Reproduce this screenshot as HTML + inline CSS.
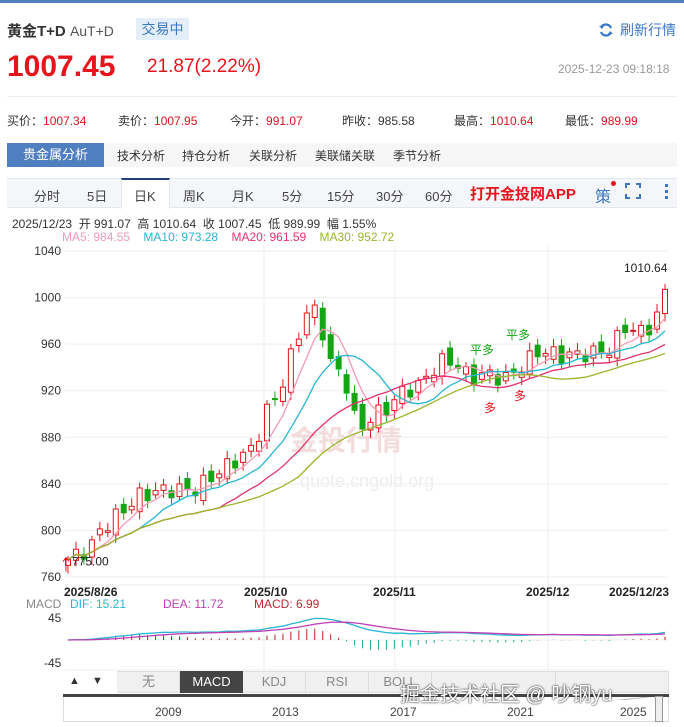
<!DOCTYPE html>
<html><head><meta charset="utf-8">
<style>
*{margin:0;padding:0;box-sizing:border-box}
body{width:684px;height:727px;background:#fff;font-family:"Liberation Sans","Noto Sans CJK SC",sans-serif;position:relative;overflow:hidden;color:#333}
.a{position:absolute;white-space:nowrap}
</style></head><body>
<div class="a" style="left:0;top:0;width:684px;height:3px;background:#4f7fbf"></div>
<div class="a" style="left:7px;top:20px;font-size:15px;color:#333"><b>黄金T+D</b> <span style="font-size:14px;color:#555">AuT+D</span></div>
<div class="a" style="left:136px;top:18px;width:53px;height:22px;background:#e3eef9;color:#3b78c4;font-size:14px;line-height:22px;text-align:center">交易中</div>
<svg class="a" style="left:598px;top:22px" width="16" height="16" viewBox="0 0 16 16"><path d="M13 6A5.5 5.5 0 0 0 3 5.5M3 10a5.5 5.5 0 0 0 10 .5" stroke="#3b78c4" stroke-width="2.2" fill="none"/><path d="M1 4l3 3 2-3zM15 12l-3-3-2 3z" fill="#3b78c4"/></svg>
<div class="a" style="left:620px;top:20px;font-size:14px;color:#3b78c4">刷新行情</div>
<div class="a" style="left:7px;top:50px;font-size:30px;font-weight:bold;color:#e8141b">1007.45</div>
<div class="a" style="left:147px;top:56px;font-size:19px;color:#e8141b">21.87(2.22%)</div>
<div class="a" style="left:558px;top:62px;font-size:12px;color:#999">2025-12-23 09:18:18</div>
<div class="a" style="left:7px;top:96px;width:670px;height:1px;background:#eee"></div>
<div class="a" style="left:7px;top:112px;font-size:12px;color:#333">买价：<span style="color:#d9131e">1007.34</span></div>
<div class="a" style="left:118px;top:112px;font-size:12px">卖价：<span style="color:#d9131e">1007.95</span></div>
<div class="a" style="left:230px;top:112px;font-size:12px">今开：<span style="color:#d9131e">991.07</span></div>
<div class="a" style="left:342px;top:112px;font-size:12px">昨收：985.58</div>
<div class="a" style="left:454px;top:112px;font-size:12px">最高：<span style="color:#d9131e">1010.64</span></div>
<div class="a" style="left:565px;top:112px;font-size:12px">最低：<span style="color:#d9131e">989.99</span></div>
<div class="a" style="left:7px;top:143px;width:670px;height:24px;background:#f6f6f6"></div>
<div class="a" style="left:7px;top:143px;width:97px;height:24px;background:#4f7fbf;color:#fff;font-size:13px;line-height:24px;text-align:center">贵金属分析</div>
<div class="a" style="left:117px;top:147px;font-size:12px;color:#333">技术分析</div>
<div class="a" style="left:182px;top:147px;font-size:12px">持仓分析</div>
<div class="a" style="left:249px;top:147px;font-size:12px">关联分析</div>
<div class="a" style="left:315px;top:147px;font-size:12px">美联储关联</div>
<div class="a" style="left:393px;top:147px;font-size:12px">季节分析</div>
<div class="a" style="left:7px;top:178px;width:670px;height:30px;background:#f4f6f9;border-top:1px solid #e3e8ef;border-bottom:1px solid #e3e8ef"></div>
<div class="a" style="left:121px;top:178px;width:49px;height:31px;background:#fff;border-top:2px solid #1f3f75;border-left:1px solid #e3e8ef;border-right:1px solid #e3e8ef"></div>
<div class="a" style="top:186px;left:34px;font-size:13px;color:#444">分时</div>
<div class="a" style="top:186px;left:87px;font-size:13px;color:#444">5日</div>
<div class="a" style="top:186px;left:134px;font-size:13px;color:#444">日K</div>
<div class="a" style="top:186px;left:183px;font-size:13px;color:#444">周K</div>
<div class="a" style="top:186px;left:232px;font-size:13px;color:#444">月K</div>
<div class="a" style="top:186px;left:282px;font-size:13px;color:#444">5分</div>
<div class="a" style="top:186px;left:327px;font-size:13px;color:#444">15分</div>
<div class="a" style="top:186px;left:376px;font-size:13px;color:#444">30分</div>
<div class="a" style="top:186px;left:425px;font-size:13px;color:#444">60分</div>
<div class="a" style="top:183px;left:470px;font-size:15px;color:#e8141b;font-weight:bold">打开金投网APP</div>
<div class="a" style="top:183px;left:595px;font-size:16px;color:#3b78c4">策</div>
<div class="a" style="top:181px;left:611px;width:5px;height:5px;border-radius:50%;background:#e8141b"></div>
<svg class="a" style="left:625px;top:183px" width="16" height="16"><path d="M1 5V1h4M11 1h4v4M15 11v4h-4M5 15H1v-4" stroke="#3b78c4" stroke-width="2" fill="none"/></svg>
<div class="a" style="left:665px;top:184px;width:3px;height:3px;background:#3b78c4;box-shadow:0 6px #3b78c4,0 12px #3b78c4"></div>
<div class="a" style="left:12px;top:215px;font-size:12px;color:#333">2025/12/23 &nbsp;开 991.07 &nbsp;高 1010.64 &nbsp;收 1007.45 &nbsp;低 989.99 &nbsp;幅 1.55%</div>
<div class="a" style="left:62px;top:230px;font-size:12px"><span style="color:#f49ab5">MA5: 984.55</span> &nbsp;&nbsp;&nbsp;<span style="color:#27b5d2">MA10: 973.28</span> &nbsp;&nbsp;&nbsp;<span style="color:#e3326f">MA20: 961.59</span> &nbsp;&nbsp;&nbsp;<span style="color:#99b52a">MA30: 952.72</span></div>
<svg id="ch" class="a" style="left:0;top:240px" width="684" height="460"></svg>
<div class="a" style="left:0;top:580px;width:684px;font-size:12px">
<span class="a" style="left:64px;top:5px;font-weight:bold;color:#222">2025/8/26</span>
<span class="a" style="left:244px;top:5px;font-weight:bold;color:#222">2025/10</span>
<span class="a" style="left:373px;top:5px;font-weight:bold;color:#222">2025/11</span>
<span class="a" style="left:526px;top:5px;font-weight:bold;color:#222">2025/12</span>
<span class="a" style="left:609px;top:5px;font-weight:bold;color:#222">2025/12/23</span>
<span class="a" style="left:26px;top:17px;color:#888">MACD</span>
<span class="a" style="left:70px;top:17px;color:#27b5d2">DIF: 15.21</span>
<span class="a" style="left:163px;top:17px;color:#c23fb5">DEA: 11.72</span>
<span class="a" style="left:254px;top:17px;color:#c0272d">MACD: 6.99</span>
</div>
<div class="a" style="left:48px;top:611px;font-size:12px;color:#333">45</div>
<div class="a" style="left:44px;top:656px;font-size:12px;color:#333">-45</div>
<div class="a" style="left:63px;top:671px;width:606px;height:22px;background:#f0f0f0;border:1px solid #ddd"></div>
<div class="a" style="left:63px;top:671px;width:54px;height:22px;background:#fff"></div>
<div class="a" style="left:69px;top:675px;font-size:11px">▲</div><div class="a" style="left:92px;top:675px;font-size:11px">▼</div>
<div class="a" style="left:118px;top:671px;width:62px;height:22px;border-right:1px solid #ddd;text-align:center;line-height:22px;font-size:13px;color:#888">无</div>
<div class="a" style="left:180px;top:671px;width:63px;height:22px;background:#444;color:#fff;text-align:center;line-height:22px;font-size:13px">MACD</div>
<div class="a" style="left:243px;top:671px;width:63px;height:22px;border-right:1px solid #ddd;text-align:center;line-height:22px;font-size:13px;color:#888">KDJ</div>
<div class="a" style="left:306px;top:671px;width:63px;height:22px;border-right:1px solid #ddd;text-align:center;line-height:22px;font-size:13px;color:#888">RSI</div>
<div class="a" style="left:369px;top:671px;width:63px;height:22px;border-right:1px solid #ddd;text-align:center;line-height:22px;font-size:13px;color:#888">BOLL</div>
<div class="a" style="left:432px;top:671px;width:124px;height:22px;border-right:1px solid #ddd"></div>
<div class="a" style="left:63px;top:694px;width:606px;height:3px;background:#444"></div>
<div class="a" style="left:63px;top:697px;width:606px;height:25px;border:1px solid #ddd;border-top:0"></div>
<div class="a" style="left:155px;top:705px;font-size:12px;color:#444">2009</div>
<div class="a" style="left:272px;top:705px;font-size:12px;color:#444">2013</div>
<div class="a" style="left:390px;top:705px;font-size:12px;color:#444">2017</div>
<div class="a" style="left:507px;top:705px;font-size:12px;color:#444">2021</div>
<div class="a" style="left:620px;top:705px;font-size:12px;color:#444">2025</div>
<div class="a" style="left:655px;top:696px;width:8px;height:26px;border:1px solid #999;background:#eee"></div>
<div class="a" style="left:400px;top:678px;font-size:20px;color:#fff;text-shadow:0 0 2px #333,0 0 1px #333">掘金技术社区 @ 吵钢yu</div>
<script>
var s=document.getElementById('ch'),h='';
var T=240;
function Y(v){return 251+(1040-v)*1.1643-T}
[1040,1000,960,920,880,840,800,760].forEach(function(v){h+='<line x1="65" x2="668" y1="'+Y(v)+'" y2="'+Y(v)+'" stroke="#eee"/><text x="61" y="'+(Y(v)+4)+'" font-size="12" text-anchor="end" fill="#333">'+v+'</text>'});
[264,395,548].forEach(function(x){h+='<line x1="'+x+'" x2="'+x+'" y1="5" y2="430" stroke="#eee"/>'});
h+='<line x1="65" x2="668" y1="345" y2="345" stroke="#eee"/><line x1="65" x2="668" y1="430" y2="430" stroke="#eee"/>';
h+='<text x="290" y="210" font-size="28" fill="#f3dcdc" font-weight="bold">金投行情</text><text x="300" y="247" font-size="18" fill="#eee">quote.cngold.org</text>';
var K=[[68,775],[90,785],[100,800],[120,815],[140,830],[165,835],[195,835],[210,845],[235,860],[255,872],[265,900],[280,920],[295,960],[310,995],[320,980],[330,945],[345,930],[358,885],[372,898],[388,905],[400,918],[420,925],[440,945],[455,945],[470,930],[485,935],[505,930],[520,940],[540,955],[560,950],[590,952],[610,955],[625,975],[640,970],[655,978],[665,1007]];
var N=76,c=[],x0=68,dx=(665-68)/(N-1);
for(var i=0;i<N;i++){var x=x0+i*dx,j=0;while(j<K.length-2&&K[j+1][0]<x)j++;var a=K[j],b=K[j+1],t=Math.min(1,Math.max(0,(x-a[0])/(b[0]-a[0])));c.push(a[1]+(b[1]-a[1])*t+(i>0&&i<N-1?Math.sin(i*2.3)*7:0));}
for(var i=0;i<N;i++){var x=x0+i*dx,o=i?c[i-1]+Math.cos(i*1.7)*5:770,cl=c[i],up=cl>=o,hi=Math.max(o,cl)+3+Math.abs(Math.sin(i))*4,lo=Math.min(o,cl)-3-Math.abs(Math.cos(i))*4;
var col=up?'#e0141d':'#14a514';h+='<line x1="'+x+'" x2="'+x+'" y1="'+Y(hi)+'" y2="'+Y(lo)+'" stroke="'+col+'"/>';
var t1=Y(Math.max(o,cl)),bh=Math.max(1,Math.abs(Y(o)-Y(cl)));h+='<rect x="'+(x-2.5)+'" y="'+t1+'" width="5" height="'+bh+'" fill="'+(up?'#fff':col)+'" stroke="'+col+'"/>';}
[[5,'#f49ab5'],[10,'#27b5d2'],[20,'#e3326f'],[30,'#99b52a']].forEach(function(m){var p='';for(var i=0;i<N;i++){var n=Math.min(m[0],i+1),sm=0;for(var k=i-n+1;k<=i;k++)sm+=c[k];var v=sm/n;p+=(i?'L':'M')+(x0+i*dx).toFixed(1)+' '+Y(v).toFixed(1);}h+='<path d="'+p+'" stroke="'+m[1]+'" fill="none" stroke-width="1.3"/>';});
h+='<text x="624" y="'+(Y(1010)-14)+'" font-size="12" fill="#222">1010.64</text><text x="72" y="'+(Y(775)+6)+'" font-size="12" fill="#222">775.00</text><path d="M66 '+(Y(775)+12)+'V'+(Y(775)-2)+'M63 '+(Y(775)+2)+'L66 '+(Y(775)-2)+'L69 '+(Y(775)+2)+'" stroke="#e0141d" fill="none"/>';
h+='<text x="470" y="114" font-size="12" fill="#14a514">平多</text><text x="506" y="99" font-size="12" fill="#14a514">平多</text><text x="484" y="172" font-size="12" fill="#e0141d">多</text><text x="514" y="160" font-size="12" fill="#e0141d">多</text>';
// MACD real
var z=400,e12=c[0],e26=c[0],dea=0,P1='',P2='';
h+='<line x1="65" x2="668" y1="'+z+'" y2="'+z+'" stroke="#eee"/>';
for(var i=0;i<N;i++){e12=e12+(c[i]-e12)*2/13;e26=e26+(c[i]-e26)*2/27;var d=e12-e26;dea=dea+(d-dea)*2/10;var x=x0+i*dx,hm=(d-dea)*2;
P1+=(i?'L':'M')+x.toFixed(1)+' '+(z-d*0.5).toFixed(1);P2+=(i?'L':'M')+x.toFixed(1)+' '+(z-dea*0.5).toFixed(1);
if(Math.abs(hm)>0.5)h+='<line x1="'+x+'" x2="'+x+'" y1="'+z+'" y2="'+(z-hm*0.5)+'" stroke="'+(hm>0?'#b22':'#2a9')+'"/>';}
h+='<path d="'+P1+'" stroke="#27b5d2" fill="none" stroke-width="1.3"/><path d="'+P2+'" stroke="#c23fb5" fill="none" stroke-width="1.3"/>';
h+='<path d="M64 478L150 474L250 470L300 472L360 476L420 474L500 468L580 464L640 458L655 456" stroke="#bbb" fill="none"/>';
s.innerHTML=h;
</script>
</body></html>
